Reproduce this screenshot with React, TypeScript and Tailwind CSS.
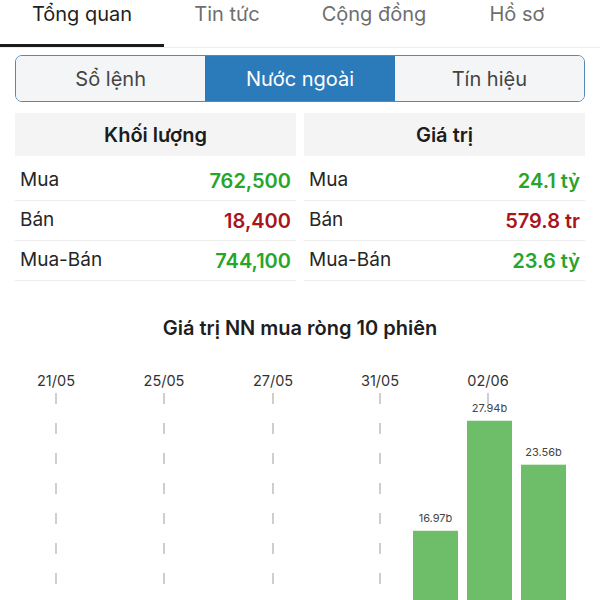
import React from 'react';

const tabs = [
  { label: 'Tổng quan', w: 'w-[164px]', active: true },
  { label: 'Tin tức', w: 'w-[126px]', active: false },
  { label: 'Cộng đồng', w: 'w-[168px]', active: false },
  { label: 'Hồ sơ', w: 'w-[118px]', active: false },
];

const segments = ['Sổ lệnh', 'Nước ngoài', 'Tín hiệu'];

type Row = { label: string; value: string; up: boolean };

const volume: Row[] = [
  { label: 'Mua', value: '762,500', up: true },
  { label: 'Bán', value: '18,400', up: false },
  { label: 'Mua-Bán', value: '744,100', up: true },
];

const amount: Row[] = [
  { label: 'Mua', value: '24.1 tỷ', up: true },
  { label: 'Bán', value: '579.8 tr', up: false },
  { label: 'Mua-Bán', value: '23.6 tỷ', up: true },
];

const StatTable: React.FC<{ title: string; rows: Row[] }> = ({ title, rows }) => (
  <div className="flex-1">
    <div className="h-[43px] bg-[#f4f4f4] flex items-center justify-center text-[20px] font-semibold text-[#1c1c1c]">
      {title}
    </div>
    <div className="mt-[5px]">
      {rows.map((r) => (
        <div
          key={r.label}
          className="h-[40px] flex items-center justify-between px-[5px] border-b border-[#ececec] text-[19px]"
        >
          <span className="text-[#262626]">{r.label}</span>
          <span className={r.up ? 'text-[20px] font-semibold text-[#27a52a]' : 'text-[20px] font-semibold text-[#a8161b]'}>
            {r.value}
          </span>
        </div>
      ))}
    </div>
  </div>
);

// chart: dates at x, bars with value in billions
const dates = [
  { x: 56, label: '21/05' },
  { x: 164, label: '25/05' },
  { x: 273, label: '27/05' },
  { x: 380, label: '31/05' },
  { x: 488, label: '02/06' },
];

const bars = [
  { x: 413, v: 16.97 },
  { x: 467, v: 27.94 },
  { x: 521, v: 23.56 },
];

const Chart: React.FC = () => {
  const top = 366; // svg top in page coords
  const base = 701 - top;
  const scale = 10.03;
  return (
    <svg width="600" height="250" viewBox="0 0 600 250" className="block">
      {dates.map((d) => (
        <g key={d.label}>
          <text
            x={d.x}
            y={20}
            textAnchor="middle"
            fontSize="14.5"
            fill="#333"
            fontFamily="Inter, 'Liberation Sans', sans-serif"
          >
            {d.label}
          </text>
          <line
            x1={d.x}
            x2={d.x}
            y1={27}
            y2={250}
            stroke="#b5b5b5"
            strokeWidth="1.3"
            strokeDasharray="11 19"
          />
        </g>
      ))}
      {bars.map((b) => {
        const h = b.v * scale;
        const y = base - h;
        return (
          <g key={b.x}>
            <rect x={b.x} y={y} width={45} height={h} fill="#6dbd69" />
            <text
              x={b.x + 22.5}
              y={y - 9}
              textAnchor="middle"
              fontSize="11"
              fill="#444"
              fontFamily="Inter, 'Liberation Sans', sans-serif"
            >
              {b.v.toFixed(2)}b
            </text>
          </g>
        );
      })}
    </svg>
  );
};

export default function App() {
  return (
    <div className="w-[600px] h-[600px] overflow-hidden bg-white font-['Inter','Liberation_Sans',sans-serif]">
      <div className="flex h-[48px] border-b border-[#eeeeee]">
        {tabs.map((t) => (
          <div key={t.label} className={`${t.w} relative flex justify-center pt-[1px]`}>
            <span className={t.active ? 'text-[20px] leading-[26px] text-[#1f1f1f]' : 'text-[20px] leading-[26px] text-[#6e6e6e]'}>
              {t.label}
            </span>
            {t.active && <div className="absolute left-0 right-0 bottom-0 h-[3px] bg-[#1a1a1a]" />}
          </div>
        ))}
      </div>

      <div className="mx-[15px] mt-[7px] h-[47px] flex rounded-[7px] border-[1.5px] border-[#5588b3] overflow-hidden">
        {segments.map((s, i) => (
          <div
            key={s}
            className={
              i === 1
                ? 'flex-1 flex items-center justify-center bg-[#2b7bba] text-white text-[20px]'
                : 'flex-1 flex items-center justify-center bg-[#f4f5f7] text-[#444] text-[20px]'
            }
          >
            {s}
          </div>
        ))}
      </div>

      <div className="mx-[15px] mt-[11px] flex gap-[8px]">
        <StatTable title="Khối lượng" rows={volume} />
        <StatTable title="Giá trị" rows={amount} />
      </div>

      <div className="mt-[33px] text-center text-[20px] leading-[28px] font-semibold text-[#1e1e1e]">
        Giá trị NN mua ròng 10 phiên
      </div>

      <div className="mt-[24px]">
        <Chart />
      </div>
    </div>
  );
}
